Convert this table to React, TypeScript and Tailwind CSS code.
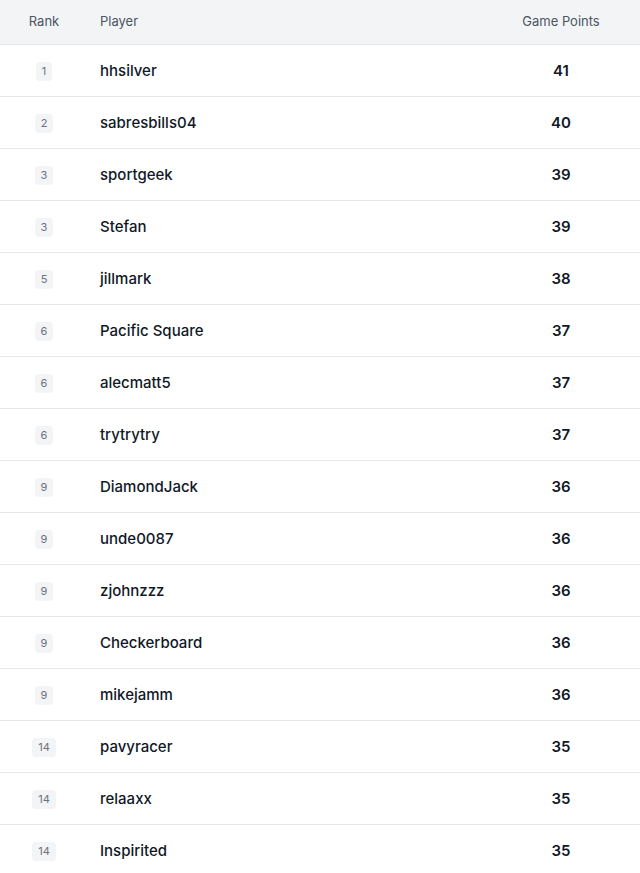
const rows = [
  { rank: 1, name: "hhsilver", points: 41 },
  { rank: 2, name: "sabresbills04", points: 40 },
  { rank: 3, name: "sportgeek", points: 39 },
  { rank: 3, name: "Stefan", points: 39 },
  { rank: 5, name: "jillmark", points: 38 },
  { rank: 6, name: "Pacific Square", points: 37 },
  { rank: 6, name: "alecmatt5", points: 37 },
  { rank: 6, name: "trytrytry", points: 37 },
  { rank: 9, name: "DiamondJack", points: 36 },
  { rank: 9, name: "unde0087", points: 36 },
  { rank: 9, name: "zjohnzzz", points: 36 },
  { rank: 9, name: "Checkerboard", points: 36 },
  { rank: 9, name: "mikejamm", points: 36 },
  { rank: 14, name: "pavyracer", points: 35 },
  { rank: 14, name: "relaaxx", points: 35 },
  { rank: 14, name: "Inspirited", points: 35 },
];

export default function App() {
  return (
    <div className="w-[640px] bg-white font-['Inter',sans-serif]">
      {/* Header */}
      <div className="grid h-[45px] grid-cols-[88px_1fr_158px] items-center border-b border-[#e5e7eb] bg-[#f3f4f6] text-[13px] text-[#4b5563]">
        <div className="text-center">Rank</div>
        <div className="pl-3">Player</div>
        <div className="text-center">Game Points</div>
      </div>

      {rows.map((row, i) => (
        <div
          key={i}
          className="grid h-[52px] grid-cols-[88px_1fr_158px] items-center border-b border-[#e5e7eb] pt-[2px]"
        >
          <div className="flex justify-center">
            <span className="flex h-[19px] items-center justify-center rounded bg-[#f3f4f6] px-[6px] text-[11px] text-[#6b7280]">
              {row.rank}
            </span>
          </div>
          <div className="pl-3 text-[15px] font-medium text-[#111827]">
            {row.name}
          </div>
          <div className="text-center text-[15px] font-semibold text-[#111827]">
            {row.points}
          </div>
        </div>
      ))}
    </div>
  );
}
